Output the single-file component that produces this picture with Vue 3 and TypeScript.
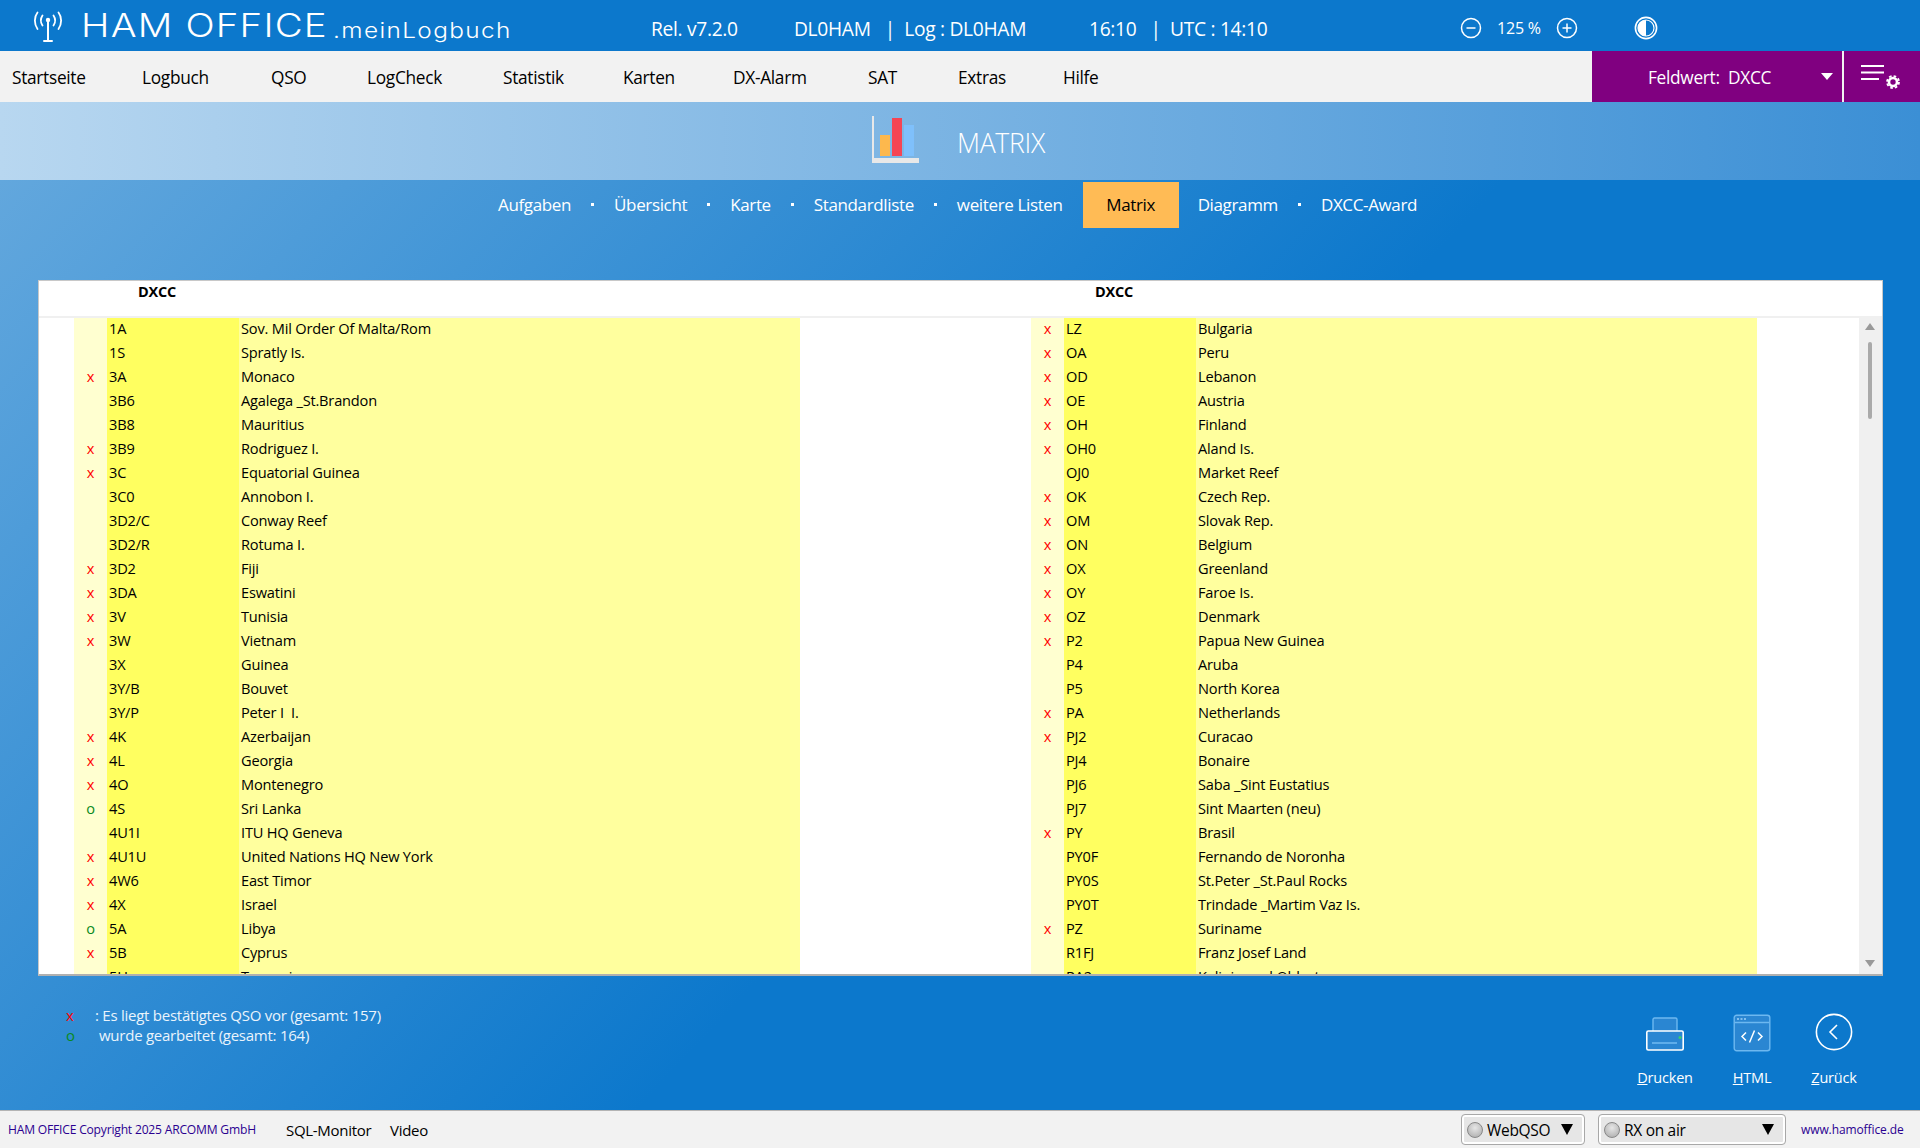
<script setup lang="ts">
type Row = [string, string, string];
const left: Row[] = [
  ['', '1A', 'Sov. Mil Order Of Malta/Rom'], ['', '1S', 'Spratly Is.'], ['x', '3A', 'Monaco'],
  ['', '3B6', 'Agalega _St.Brandon'], ['', '3B8', 'Mauritius'], ['x', '3B9', 'Rodriguez I.'],
  ['x', '3C', 'Equatorial Guinea'], ['', '3C0', 'Annobon I.'], ['', '3D2/C', 'Conway Reef'],
  ['', '3D2/R', 'Rotuma I.'], ['x', '3D2', 'Fiji'], ['x', '3DA', 'Eswatini'], ['x', '3V', 'Tunisia'],
  ['x', '3W', 'Vietnam'], ['', '3X', 'Guinea'], ['', '3Y/B', 'Bouvet'], ['', '3Y/P', 'Peter I\u00a0 I.'],
  ['x', '4K', 'Azerbaijan'], ['x', '4L', 'Georgia'], ['x', '4O', 'Montenegro'], ['o', '4S', 'Sri Lanka'],
  ['', '4U1I', 'ITU HQ Geneva'], ['x', '4U1U', 'United Nations HQ New York'], ['x', '4W6', 'East Timor'],
  ['x', '4X', 'Israel'], ['o', '5A', 'Libya'], ['x', '5B', 'Cyprus'], ['', '5H', 'Tanzania'],
];
const right: Row[] = [
  ['x', 'LZ', 'Bulgaria'], ['x', 'OA', 'Peru'], ['x', 'OD', 'Lebanon'], ['x', 'OE', 'Austria'],
  ['x', 'OH', 'Finland'], ['x', 'OH0', 'Aland Is.'], ['', 'OJ0', 'Market Reef'], ['x', 'OK', 'Czech Rep.'],
  ['x', 'OM', 'Slovak Rep.'], ['x', 'ON', 'Belgium'], ['x', 'OX', 'Greenland'], ['x', 'OY', 'Faroe Is.'],
  ['x', 'OZ', 'Denmark'], ['x', 'P2', 'Papua New Guinea'], ['', 'P4', 'Aruba'], ['', 'P5', 'North Korea'],
  ['x', 'PA', 'Netherlands'], ['x', 'PJ2', 'Curacao'], ['', 'PJ4', 'Bonaire'], ['', 'PJ6', 'Saba _Sint Eustatius'],
  ['', 'PJ7', 'Sint Maarten (neu)'], ['x', 'PY', 'Brasil'], ['', 'PY0F', 'Fernando de Noronha'],
  ['', 'PY0S', 'St.Peter _St.Paul Rocks'], ['', 'PY0T', 'Trindade _Martim Vaz Is.'], ['x', 'PZ', 'Suriname'],
  ['', 'R1FJ', 'Franz Josef Land'], ['', 'RA2', 'Kaliningrad Oblast'],
];
const rows = left.map((l, i) => ({ l, r: right[i] }));
const menu = ['Startseite', 'Logbuch', 'QSO', 'LogCheck', 'Statistik', 'Karten', 'DX-Alarm', 'SAT', 'Extras', 'Hilfe'];
</script>

<template>
  <div class="app">
    <header class="titlebar">
      <div class="brand">
        <svg class="antenna" width="30" height="32" viewBox="0 0 30 32" fill="none" stroke="#fff" stroke-linecap="round">
          <path d="M15 10V29M11 30H19" stroke-width="2" />
          <circle cx="15" cy="9" r="2.2" fill="#fff" stroke="none" />
          <path d="M9.5 4.5C7.5 7.5 7.5 11.5 9.5 14.5M20.5 4.5C22.5 7.5 22.5 11.5 20.5 14.5" stroke-width="1.8" />
          <path d="M4.5 1.5C1 6 1 13 4.5 18M25.5 1.5C29 6 29 13 25.5 18" stroke-width="1.8" />
        </svg>
        <span class="ham">HAM OFFICE</span><span class="mein">.meinLogbuch</span>
      </div>
      <span class="tinfo">Rel. v7.2.0</span>
      <span class="tinfo">DL0HAM&nbsp;&nbsp; | &nbsp;Log : DL0HAM</span>
      <span class="tinfo">16:10 &nbsp; | &nbsp;UTC : 14:10</span>
      <div class="zoomctl">
        <svg width="22" height="22" viewBox="0 0 22 22" fill="none" stroke="#fff" stroke-width="1.5"><circle cx="11" cy="11" r="9.5" /><path d="M6.5 11H15.5" /></svg>
        <span class="pct">125 %</span>
        <svg width="22" height="22" viewBox="0 0 22 22" fill="none" stroke="#fff" stroke-width="1.5"><circle cx="11" cy="11" r="9.5" /><path d="M6.5 11H15.5M11 6.5V15.5" /></svg>
      </div>
      <svg class="contrast" width="24" height="24" viewBox="0 0 24 24"><circle cx="12" cy="12" r="10.6" fill="none" stroke="#fff" stroke-width="1.6" /><path d="M12 4A8 8 0 0 0 12 20Z" fill="#fff" /><circle cx="12" cy="12" r="8" fill="none" stroke="#fff" stroke-width="1.2" /></svg>
      <div class="winbtns">
        <svg width="14" height="14" viewBox="0 0 14 14" stroke="#fff" fill="none"><path d="M1 7.5H13" /></svg>
        <svg width="14" height="14" viewBox="0 0 14 14" stroke="#fff" fill="none"><path d="M1.5 4.5H9.5V12.5H1.5ZM4.5 4V1.5H12.5V9.5H10" /></svg>
        <svg width="14" height="14" viewBox="0 0 14 14" stroke="#fff" fill="none"><path d="M1 1L13 13M13 1L1 13" /></svg>
      </div>
    </header>

    <nav class="menubar">
      <div class="menu">
        <span v-for="m in menu" :key="m">{{ m }}</span>
      </div>
      <div class="feld">
        <span class="feldtext">Feldwert:&nbsp; DXCC</span>
        <i class="feldarrow"></i>
      </div>
      <div class="menubtn">
        <svg width="46" height="36" viewBox="0 0 46 36" fill="none" stroke="#fff">
          <path d="M7 6H30M7 12.5H30M7 19H25" stroke-width="2.2" />
          <circle cx="39" cy="22" r="4" stroke-width="2.6" />
          <circle cx="39" cy="22" r="6" stroke-width="1.8" stroke-dasharray="2.6 2.1" />
        </svg>
      </div>
    </nav>

    <section class="band">
      <svg width="47" height="47" viewBox="0 0 47 47">
        <rect x="8" y="19" width="10" height="21" fill="#fdb84d" />
        <rect x="20" y="2" width="10" height="38" fill="#f54454" />
        <rect x="32" y="9" width="10" height="31" fill="#7fc0fb" />
        <path d="M0 0H2V42H47V47H0Z" fill="#e8e8e8" />
      </svg>
      <h1 class="bandtitle">MATRIX</h1>
    </section>

    <main class="main">
      <div class="subnav">
        <a>Aufgaben</a><i class="dot"></i><a>Übersicht</a><i class="dot"></i><a>Karte</a><i class="dot"></i><a>Standardliste</a><i class="dot"></i><a>weitere Listen</a><a class="active">Matrix</a><a>Diagramm</a><i class="dot"></i><a>DXCC-Award</a>
      </div>

      <div class="panel">
        <div class="phead">
          <b class="h1">DXCC</b>
          <b class="h2">DXCC</b>
        </div>
        <div class="pbody">
          <div class="table">
            <div v-for="row in rows" :key="row.l[1]" class="row">
              <span class="gutter"></span>
              <span class="mark" :class="row.l[0]">{{ row.l[0] }}</span>
              <span class="code">{{ row.l[1] }}</span>
              <span class="name">{{ row.l[2] }}</span>
              <span class="mid"></span>
              <span class="mark" :class="row.r[0]">{{ row.r[0] }}</span>
              <span class="code">{{ row.r[1] }}</span>
              <span class="name">{{ row.r[2] }}</span>
            </div>
          </div>
          <div class="scroll">
            <i class="up"></i>
            <i class="thumb"></i>
            <i class="down"></i>
          </div>
        </div>
      </div>

      <div class="bottom">
        <div class="legend">
          <div class="lg1"><span class="lx">x</span><span>: Es liegt bestätigtes QSO vor (gesamt: 157)</span></div>
          <div class="lg2"><span class="lo">o</span><span>wurde gearbeitet (gesamt: 164)</span></div>
        </div>
        <div class="actions">
          <div class="act a1">
            <svg width="40" height="36" viewBox="0 0 40 36">
              <rect x="8" y="1" width="24" height="15" rx="1.5" fill="#2a86d2" stroke="#6db8f0" stroke-width="1.4" />
              <rect x="1.8" y="14" width="36.4" height="19" rx="1.5" fill="#2a86d2" stroke="#fff" stroke-width="1.6" />
              <path d="M7 26H32" stroke="#6db8f0" stroke-width="1.6" />
              <circle cx="35" cy="20.5" r="1.5" fill="#35d06a" />
            </svg>
            <span><u>D</u>rucken</span>
          </div>
          <div class="act a2">
            <svg width="38" height="38" viewBox="0 0 38 38" fill="none">
              <rect x="1.2" y="1.2" width="35.6" height="35.6" rx="2.5" fill="#2a86d2" stroke="#6db8f0" stroke-width="1.4" />
              <path d="M1.5 8.5H36.5" stroke="#6db8f0" stroke-width="1.4" />
              <path d="M4 5H6M7.5 5H9.5M11 5H13" stroke="#9fd2f7" stroke-width="1.4" />
              <path d="M13 18.5L9 22.5L13 26.5M25 18.5L29 22.5L25 26.5M21.5 16.5L16.5 28.5" stroke="#fff" stroke-width="1.5" />
            </svg>
            <span><u>H</u>TML</span>
          </div>
          <div class="act a3">
            <svg width="38" height="38" viewBox="0 0 38 38" fill="none" stroke="#fff">
              <circle cx="19" cy="19" r="17.6" stroke-width="1.6" />
              <path d="M22 12L15 19L22 26" stroke-width="1.6" />
            </svg>
            <span><u>Z</u>urück</span>
          </div>
        </div>
      </div>
    </main>

    <footer class="footer">
      <span class="copy">HAM OFFICE Copyright 2025 ARCOMM GmbH</span>
      <span class="flink sql">SQL-Monitor</span>
      <span class="flink">Video</span>
      <div class="combo webqso"><i class="led"></i><span>WebQSO</span><i class="tri"></i></div>
      <div class="combo rx"><i class="led"></i><span>RX on air</span><i class="tri"></i></div>
      <span class="www">www.hamoffice.de</span>
    </footer>
  </div>
</template>

<style scoped>
.app {
  width: 1920px;
  height: 1148px;
  display: flex;
  flex-direction: column;
  overflow: hidden;
  font-family: "Open Sans", "Noto Sans", sans-serif;
  color: #000;
}
.titlebar {
  height: 51px;
  background: #0c78cc;
  color: #fff;
  display: grid;
  grid-template-columns: 651px 143px 295px 371px 174px 1fr;
  align-items: center;
  flex: none;
}
.brand {
  display: flex;
  align-items: baseline;
  padding-left: 33px;
  white-space: nowrap;
  height: 51px;
}
.antenna { align-self: flex-start; margin-top: 11px; margin-right: 18px; }
.ham {
  display: inline-block;
  width: 252px;
  font-family: Inter, sans-serif;
  font-weight: 300;
  font-size: 32px;
  line-height: 51px;
  letter-spacing: 1px;
  transform: scaleX(1.2);
  transform-origin: left center;
}
.mein {
  display: inline-block;
  font-family: Inter, sans-serif;
  font-weight: 300;
  font-size: 21px;
  line-height: 51px;
  letter-spacing: 1.2px;
  transform: translateY(1px) scaleX(1.16);
  transform-origin: left center;
}
.tinfo { font-size: 19.2px; letter-spacing: -0.3px; white-space: nowrap; padding-top: 6px; }
.zoomctl { display: flex; align-items: center; gap: 15px; padding-top: 4px; }
.pct { font-size: 16px; letter-spacing: -0.2px; }
.zoomctl svg { flex: none; }
.contrast { align-self: center; margin-top: 4px; }
.winbtns {
  display: flex;
  justify-content: flex-end;
  gap: 44px;
  padding-right: 25px;
  align-self: flex-start;
  padding-top: 12px;
}
.menubar {
  height: 51px;
  background: #f2f2f2;
  display: flex;
  flex: none;
}
.menu {
  width: 1592px;
  display: grid;
  grid-template-columns: 130px 129px 96px 136px 120px 110px 135px 90px 105px 1fr;
  align-items: center;
  padding-left: 12px;
  box-sizing: border-box;
  font-size: 17.3px;
  letter-spacing: -0.3px;
  padding-top: 1px;
}
.feld {
  width: 250px;
  background: #800080;
  color: #fff;
  display: flex;
  align-items: center;
  position: relative;
  font-size: 17.3px;
  letter-spacing: -0.3px;
  padding-left: 56px;
  padding-top: 1px;
  box-sizing: border-box;
}
.feldarrow {
  position: absolute;
  left: 229px;
  top: 22px;
  width: 0;
  height: 0;
  border-left: 6px solid transparent;
  border-right: 6px solid transparent;
  border-top: 7px solid #fff;
}
.menubtn {
  flex: 1;
  margin-left: 2px;
  background: #800080;
  display: flex;
  align-items: flex-start;
  padding-top: 9px;
  padding-left: 10px;
}
.band {
  height: 78px;
  flex: none;
  background: linear-gradient(90deg, #b8d7f0, #3b8fd5);
  display: flex;
  align-items: center;
  padding-left: 872px;
  box-sizing: border-box;
  color: #fff;
}
.bandtitle {
  margin: 3px 0 0 38px;
  font-weight: 300;
  font-size: 26.6px;
  letter-spacing: -0.3px;
  font-family: "Open Sans", sans-serif;
}
.band svg { margin-top: -4px; }
.main {
  flex: 1;
  background: linear-gradient(133deg, #62a7dd 0%, #0c78cc 54%);
  display: flex;
  flex-direction: column;
  min-height: 0;
}
.subnav {
  margin-top: 1px;
  height: 47px;
  display: flex;
  align-items: center;
  padding-left: 498px;
  padding-bottom: 1px;
  box-sizing: border-box;
  color: #fff;
  font-size: 17px;
  letter-spacing: -0.36px;
  white-space: nowrap;
}
.dot {
  width: 3px;
  height: 3px;
  background: #fff;
  margin: 0 20px;
}
.active {
  background: #ffbb55;
  color: #000;
  height: 46px;
  width: 96px;
  margin: 1px 19px 0 20px;
  display: flex;
  align-items: center;
  justify-content: center;
}
.panel {
  margin: 52px 37px 0 38px;
  height: 696px;
  flex: none;
  background: #fff;
  border-top: 1px solid #c8c8c8;
  border-left: 1px solid #c8c8c8;
  border-right: 1px solid #c8c8c8;
  border-bottom: 2px solid #b0b0b0;
  box-sizing: border-box;
  display: flex;
  flex-direction: column;
}
.phead {
  height: 35px;
  border-bottom: 2px solid #f0f0f0;
  flex: none;
  position: relative;
  font-size: 14.5px;
  letter-spacing: -0.2px;
  box-sizing: content-box;
}
.h1 { position: absolute; left: 99px; top: 1px; }
.h2 { position: absolute; left: 1056px; top: 1px; }
.pbody { flex: 1; display: flex; min-height: 0; }
.table { flex: 1; overflow: hidden; }
.row {
  display: grid;
  grid-template-columns: 35px 33px 132px 561px 231px 33px 132px 561px;
  height: 24px;
  line-height: 20px;
  font-size: 14.6px;
  letter-spacing: -0.19px;
}
.row span { white-space: pre; }
.mark { background: #ffffd0; text-align: center; }
.mark.x { color: #f00; }
.mark.o { color: #0a8a1e; }
.code { background: #ffff60; padding-left: 2px; }
.name { background: #ffff9e; padding-left: 2px; }
.scroll {
  width: 23px;
  flex: none;
  background: #f0f0f0;
  position: relative;
}
.up, .down, .thumb { position: absolute; display: block; }
.up {
  left: 6px;
  top: 5px;
  width: 0;
  height: 0;
  border-left: 5px solid transparent;
  border-right: 5px solid transparent;
  border-bottom: 7px solid #999;
}
.down {
  left: 6px;
  bottom: 7px;
  width: 0;
  height: 0;
  border-left: 5px solid transparent;
  border-right: 5px solid transparent;
  border-top: 7px solid #999;
}
.thumb {
  left: 9px;
  top: 24px;
  width: 4px;
  height: 77px;
  background: #aaa;
  border-radius: 2px;
}
.bottom {
  flex: 1;
  position: relative;
  display: flex;
  justify-content: space-between;
}
.legend {
  padding-top: 29px;
  padding-left: 66px;
  color: #eaf4fc;
  font-size: 15px;
  letter-spacing: -0.25px;
  line-height: 20px;
}
.lg1, .lg2 { display: flex; }
.lx { color: #f00; width: 29px; }
.lo { color: #0a8a1e; width: 33px; }
.actions {
  position: absolute;
  left: 0;
  top: 0;
  width: 1920px;
  height: 100%;
  color: #fff;
  font-size: 14.5px;
  letter-spacing: -0.2px;
}
.act {
  position: absolute;
  top: 0;
  width: 80px;
  display: flex;
  flex-direction: column;
  align-items: center;
}
.act span { position: absolute; top: 92px; white-space: nowrap; }
.a1 { left: 1625px; }
.a2 { left: 1712px; }
.a3 { left: 1794px; }
.a1 svg { margin-top: 41px; }
.a2 svg { margin-top: 38px; }
.a3 svg { margin-top: 37px; }
.footer {
  height: 38px;
  flex: none;
  box-sizing: border-box;
  background: #f2f2f2;
  border-top: 1px solid #b4b4b4;
  display: flex;
  align-items: center;
  position: relative;
}
.copy, .www { color: #2a0090; font-size: 12.1px; letter-spacing: -0.2px; white-space: nowrap; }
.copy { margin-left: 8px; width: 278px; }
.www { position: absolute; left: 1801px; top: 10px; font-size: 12px; letter-spacing: -0.1px; }
.flink { font-size: 15px; letter-spacing: -0.3px; }
.sql { width: 104px; }
.combo {
  position: absolute;
  top: 3px;
  height: 31px;
  box-sizing: border-box;
  background: #e6e6e6;
  border: 1px solid #a8a8a8;
  border-radius: 4px;
  box-shadow: inset 0 0 0 2px #fff;
  display: flex;
  align-items: center;
  font-size: 15.5px;
  letter-spacing: -0.3px;
}
.webqso { left: 1461px; width: 124px; }
.rx { left: 1598px; width: 188px; }
.led {
  width: 16px;
  height: 16px;
  box-sizing: border-box;
  border-radius: 50%;
  border: 1px solid #888;
  background: radial-gradient(circle at 50% 35%, #e6e6e6, #a8a8a8);
  margin: 0 4px 0 5px;
  flex: none;
}
.tri {
  position: absolute;
  right: 11px;
  top: 9px;
  width: 0;
  height: 0;
  border-left: 6px solid transparent;
  border-right: 6px solid transparent;
  border-top: 11px solid #000;
}
</style>

<style>
html, body { margin: 0; background: #0c78cc; }
</style>
